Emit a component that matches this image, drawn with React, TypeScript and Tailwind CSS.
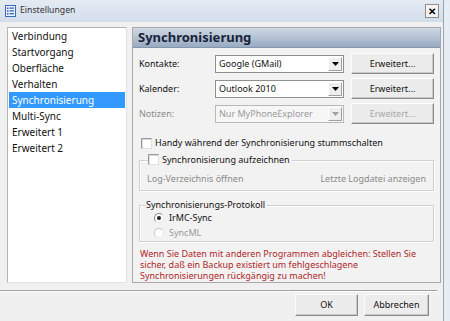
import React from "react";

const font = { fontFamily: '"Noto Sans", "Open Sans", sans-serif' };

function Select({ value, disabled }: { value: string; disabled?: boolean }) {
  return (
    <div
      className={`w-[129px] h-[18px] flex items-center border ${disabled ? "border-[#b8b8b8] bg-[#f6f6f6] text-[#9a9a9a]" : "border-[#8e8f8f] bg-white text-[#111]"}`}
    >
      <span className="flex-1 pl-[3px] text-[9px] leading-[14px] whitespace-nowrap overflow-hidden">{value}</span>
      <div className="w-[14px] h-[14px] mr-[1px] flex items-center justify-center bg-[#eeeeee] border border-t-white border-l-white border-r-[#a0a0a0] border-b-[#a0a0a0]">
        <svg width="7" height="4" viewBox="0 0 7 4">
          <path d="M0 0 L7 0 L3.5 4 Z" fill={disabled ? "#a0a0a0" : "#000"} />
        </svg>
      </div>
    </div>
  );
}

function Btn({ label, disabled, w, h = "h-[21px]" }: { label: string; disabled?: boolean; w: string; h?: string }) {
  return (
    <div
      className={`${w} ${h} flex items-center justify-center bg-[#ececec] border border-t-[#fcfcfc] border-l-[#fcfcfc] border-r-[#8a8a8a] border-b-[#8a8a8a] shadow-[inset_-1px_-1px_0_#c8c8c8] text-[9px] ${disabled ? "text-[#a8a8a8]" : "text-[#111]"}`}
    >
      {label}
    </div>
  );
}

function Check() {
  return (
    <div className="w-[11px] h-[11px] bg-white border border-[#9a9a9a] border-r-[#e0e0e0] border-b-[#e0e0e0] shadow-[inset_1px_1px_0_#d8d8d8] shrink-0" />
  );
}

function Radio({ checked, disabled }: { checked?: boolean; disabled?: boolean }) {
  return (
    <div
      className={`w-[10px] h-[10px] rounded-full border ${disabled ? "border-[#c8c8c8]" : "border-[#8a8a8a]"} border-r-[#e6e6e6] border-b-[#e6e6e6] bg-white flex items-center justify-center shrink-0`}
    >
      {checked && <div className="w-[4px] h-[4px] rounded-full bg-[#222]" />}
    </div>
  );
}

export default function App() {
  const items = [
    "Verbindung",
    "Startvorgang",
    "Oberfläche",
    "Verhalten",
    "Synchronisierung",
    "Multi-Sync",
    "Erweitert 1",
    "Erweitert 2",
  ];
  const warn = [
    "Wenn Sie Daten mit anderen Programmen abgleichen: Stellen Sie",
    "sicher, daß ein Backup existiert um fehlgeschlagene",
    "Synchronisierungen rückgängig zu machen!",
  ];
  return (
    <div className="w-[450px] h-[321px] bg-[#e6edf5] overflow-hidden flex" style={font}>
      <div className="w-[444px] h-full bg-[#f0f0f0] flex flex-col border-r border-[#9aa4b0]">
        {/* title bar */}
        <div className="h-[22px] flex items-center pl-[5px] pr-[4px] bg-gradient-to-b from-[#e4ebf3] to-[#d3deea]">
          <svg width="11" height="12" viewBox="0 0 11 12">
            <rect x="0.5" y="0.5" width="10" height="11" fill="#eaf2fc" stroke="#3d6cb5" />
            <rect x="2" y="2.5" width="1.5" height="1.5" fill="#2a5db0" />
            <rect x="4.5" y="2.5" width="4.5" height="1.2" fill="#2a5db0" />
            <rect x="2" y="5.3" width="1.5" height="1.5" fill="#2a5db0" />
            <rect x="4.5" y="5.3" width="4.5" height="1.2" fill="#2a5db0" />
            <rect x="2" y="8.1" width="1.5" height="1.5" fill="#2a5db0" />
            <rect x="4.5" y="8.1" width="4.5" height="1.2" fill="#2a5db0" />
          </svg>
          <span className="ml-[4px] text-[8.7px] text-[#333]">Einstellungen</span>
          <div className="flex-1" />
          <div className="w-[14px] h-[14px] flex items-center justify-center bg-[#f4f4f4] border border-[#8c8c8c] text-[10px] font-bold leading-none text-black">
            ✕
          </div>
        </div>

        {/* body */}
        <div className="flex gap-[5px] pl-[7px] pr-[2px] pt-[5px] h-[262px]">
          {/* nav list */}
          <div className="w-[122px] h-[256px] bg-white border border-[#b4b4b4] border-r-[#e2e2e2] border-b-[#e2e2e2] px-[1px]">
            {items.map((it) => (
              <div
                key={it}
                className={`h-[16px] flex items-center pl-[3px] text-[10px] ${it === "Synchronisierung" ? "bg-[#3399ff] text-white" : "text-[#111]"}`}
              >
                {it}
              </div>
            ))}
          </div>

          {/* right panel */}
          <div className="flex-1 h-[256px] border border-[#a9a9a9] bg-[#f2f2f2] flex flex-col">
            <div className="h-[20px] flex items-center pl-[5px] bg-gradient-to-b from-[#cfd9e5] to-[#98abc1] border-b border-[#8396ad]">
              <span className="text-[13px] font-bold text-[#18243a] leading-none">Synchronisierung</span>
            </div>
            <div className="flex flex-col px-[6px] pt-[3px]">
              {[
                { l: "Kontakte:", v: "Google (GMail)" },
                { l: "Kalender:", v: "Outlook 2010" },
                { l: "Notizen:", v: "Nur MyPhoneExplorer", d: true },
              ].map((r) => (
                <div key={r.l} className="h-[25px] flex items-center">
                  <span className={`w-[76px] text-[9px] ${r.d ? "text-[#8a8a8a]" : "text-[#111]"}`}>{r.l}</span>
                  <Select value={r.v} disabled={r.d} />
                  <div className="w-[7px]" />
                  <Btn label="Erweitert..." disabled={r.d} w="w-[83px]" />
                </div>
              ))}

              <div className="h-[18px] mt-[8px] flex items-center pl-[2px] gap-[3px]">
                <Check />
                <span className="text-[9px] text-[#111]">Handy während der Synchronisierung stummschalten</span>
              </div>

              {/* group 1 */}
              <div className="relative mt-[8px] h-[31px] border border-[#d0d0d0] shadow-[1px_1px_0_#fff,inset_1px_1px_0_#fff] flex items-end justify-between px-[7px] pb-[5px] text-[9px] text-[#8a8a8a]">
                <div className="absolute -top-[8px] left-[8px] flex items-center gap-[3px] bg-[#f2f2f2] pr-[2px]">
                  <Check />
                  <span className="text-[#111]">Synchronisierung aufzeichnen</span>
                </div>
                <span>Log-Verzeichnis öffnen</span>
                <span>Letzte Logdatei anzeigen</span>
              </div>

              {/* group 2 */}
              <div className="relative mt-[14px] h-[37px] border border-[#d0d0d0] shadow-[1px_1px_0_#fff,inset_1px_1px_0_#fff] flex flex-col pl-[14px] pt-[4px] text-[9px]">
                <div className="absolute -top-[8px] left-[6px] bg-[#f2f2f2] pr-[2px] text-[#111]">
                  Synchronisierungs-Protokoll
                </div>
                <div className="h-[15px] flex items-center gap-[5px] text-[#111]">
                  <Radio checked />
                  <span>IrMC-Sync</span>
                </div>
                <div className="h-[15px] flex items-center gap-[5px] text-[#9a9a9a]">
                  <Radio disabled />
                  <span>SyncML</span>
                </div>
              </div>

              <div className="mt-[6px] flex flex-col pl-[1px]">
                {warn.map((w) => (
                  <div key={w} className="h-[11px] text-[9px] leading-[11px] text-[#b0262a] whitespace-nowrap">
                    {w}
                  </div>
                ))}
              </div>
            </div>
          </div>
        </div>

        {/* separator */}
        <div className="mt-[6px] mr-[6px] h-[2px] border-t border-[#a0a0a0] border-b border-b-white" />

        {/* buttons */}
        <div className="flex justify-end gap-[6px] pr-[14px] pt-[2px]">
          <Btn label="OK" w="w-[63px]" h="h-[22px]" />
          <Btn label="Abbrechen" w="w-[65px]" h="h-[22px]" />
        </div>
      </div>
    </div>
  );
}
